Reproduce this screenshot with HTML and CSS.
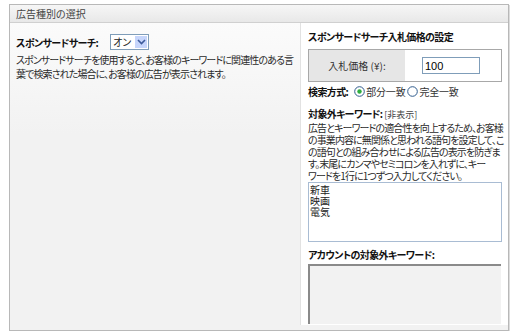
FILE: index.html
```html
<!DOCTYPE html>
<html lang="ja">
<head>
    <meta charset="UTF-8">
    <meta name="viewport" content="width=device-width, initial-scale=1.0">
    <title>広告種別の選択</title>
    <link rel="stylesheet" href="styles.css">
</head>
<body>
    <div class="panel">
        <div class="panel-head">広告種別の選択</div>
        <div class="panel-body">
            <div class="col-left">
                <div class="field-row">
                    <span class="label-bold">スポンサードサーチ:</span>
                    <span class="select">
                        <span class="select-val">オン</span>
                        <span class="select-btn">
                            <svg width="9" height="6" viewBox="0 0 9 6"><path d="M1 1 L4.5 4.5 L8 1" fill="none" stroke="#3c5a9a" stroke-width="1.6"/></svg>
                        </span>
                    </span>
                </div>
                <p class="desc desc-left">スポンサードサーチを使用すると、お客様のキーワードに関連性のある言<br>葉で検索された場合に、お客様の広告が表示されます。</p>
            </div>
            <div class="col-right">
                <div class="section-title">スポンサードサーチ入札価格の設定</div>
                <div class="bid-box">
                    <div class="bid-label">入札価格 (¥):</div>
                    <div class="bid-value"><input type="text" class="bid-input" value="100"></div>
                </div>
                <div class="match-row">
                    <span class="label-bold">検索方式:</span>
                    <span class="radio">
                        <svg width="11" height="11" viewBox="0 0 11 11"><circle cx="5.5" cy="5.5" r="4.8" fill="#fff" stroke="#2f5b8c" stroke-width="1"/><circle cx="5.5" cy="5.5" r="2.2" fill="#2fae3f"/></svg>
                        部分一致
                    </span>
                    <span class="radio">
                        <svg width="11" height="11" viewBox="0 0 11 11"><circle cx="5.5" cy="5.5" r="4.8" fill="#fff" stroke="#2f5b8c" stroke-width="1"/></svg>
                        完全一致
                    </span>
                </div>
                <div class="section-title kw-title">対象外キーワード: <span class="toggle">[非表示]</span></div>
                <p class="desc desc-right">広告とキーワードの適合性を向上するため、お客様<br>の事業内容に無関係と思われる語句を設定して、こ<br>の語句との組み合わせによる広告の表示を防ぎま<br>す。末尾にカンマやセミコロンを入れずに、キー<br>ワードを1行に1つずつ入力してください。</p>
                <div class="kw-area">
                    <div>新車</div>
                    <div>映画</div>
                    <div>電気</div>
                </div>
                <div class="section-title account-title">アカウントの対象外キーワード:</div>
                <div class="kw-disabled"></div>
            </div>
        </div>
    </div>
</body>
</html>
```

FILE: styles.css
```css
body {
    margin: 0;
    background: #fff;
    font-family: "Noto Sans CJK JP", "Noto Sans", sans-serif;
    font-size: 10px;
    letter-spacing: -0.9px;
    color: #222;
    font-feature-settings: "palt";
}
.panel {
    margin: 4px 0 0 9px;
    width: 498px;
    height: 325px;
    border: 1px solid #b8b8b8;
    box-shadow: 1px 1px 0 #dcdcdc;
    display: flex;
    flex-direction: column;
}
.panel-head {
    height: 17px;
    line-height: 17px;
    padding-left: 6px;
    font-size: 10px;
    letter-spacing: 0;
    color: #444;
    background: linear-gradient(#f6f6f6, #e8e8e8);
    border-bottom: 1px solid #d0d0d0;
}
.panel-body {
    flex: 1;
    display: flex;
    min-height: 0;
    background: #f2f2f2;
}
.col-left {
    width: 284px;
    padding: 12px 0 0 6px;
    background: linear-gradient(#fbfbfb, #f2f2f2 110px);
}
.field-row {
    display: flex;
    align-items: center;
    height: 14px;
}
.label-bold {
    font-weight: bold;
    letter-spacing: -0.6px;
    color: #111;
}
.select {
    display: inline-flex;
    margin-left: 12px;
    height: 14px;
    border: 1px solid #7f9db9;
    background: #fff;
    letter-spacing: 0;
}
.select-val {
    width: 21px;
    line-height: 14px;
    padding-left: 2px;
}
.select-btn {
    width: 12px;
    margin: 1px;
    background: #c6d5fb;
    display: flex;
    align-items: center;
    justify-content: center;
}
.desc {
    margin: 0;
    white-space: nowrap;
    color: #2a2a2a;
}
.desc-left {
    margin-top: 4px;
    line-height: 14px;
}
.col-right {
    flex: 1;
    min-width: 0;
    overflow: hidden;
    background: #fff;
    border-left: 1px solid #e2e2e2;
    padding: 7px 6px 0 7px;
    margin-bottom: 5px;
}
.section-title {
    font-weight: bold;
    letter-spacing: -0.6px;
    color: #111;
    line-height: 14px;
}
.bid-box {
    display: flex;
    margin-top: 5px;
    height: 31px;
    border: 1px solid #a8a8a8;
}
.bid-label {
    width: 96px;
    background: #e6e6e6;
    display: flex;
    align-items: center;
    justify-content: center;
    letter-spacing: 0;
    color: #333;
}
.bid-value {
    flex: 1;
    display: flex;
    align-items: center;
    padding-left: 17px;
}
.bid-input {
    width: 52px;
    height: 15px;
    padding: 0 2px;
    border: 1px solid #7f9db9;
    font-family: "Liberation Sans", sans-serif;
    font-size: 11px;
    letter-spacing: 0;
    color: #000;
}
.match-row {
    display: flex;
    align-items: center;
    margin-top: 2px;
    height: 14px;
}
.radio {
    display: inline-flex;
    align-items: center;
    gap: 1px;
    margin-right: 2px;
    letter-spacing: -0.2px;
    color: #333;
}
.match-row .label-bold {
    margin-right: 6px;
}
.kw-title {
    margin-top: 9px;
}
.toggle {
    font-weight: normal;
    font-size: 9px;
    letter-spacing: 0;
    color: #444;
}
.desc-right {
    line-height: 12px;
}
.kw-area {
    box-sizing: border-box;
    width: 194px;
    height: 60px;
    padding: 1px;
    border: 1px solid #a9bcd3;
    background: #fff;
    line-height: 11px;
    letter-spacing: 0;
    color: #222;
}
.account-title {
    margin-top: 6px;
}
.kw-disabled {
    box-sizing: border-box;
    width: 193px;
    height: 60px;
    margin-top: 2px;
    background: #f2f2f2;
    border-top: 2px solid #8a8a8a;
    border-left: 2px solid #8a8a8a;
}
```
